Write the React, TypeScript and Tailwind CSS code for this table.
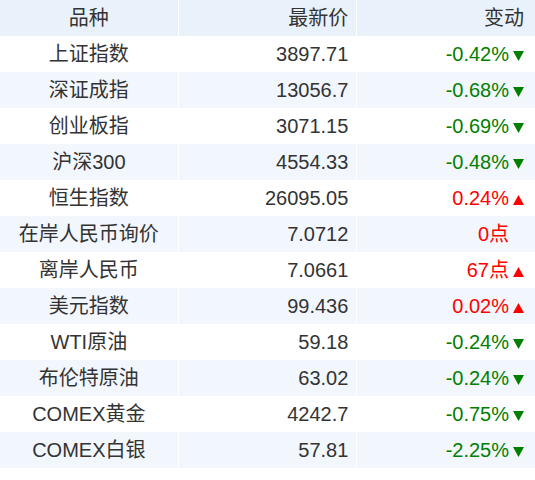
import React from "react";

type Row = { name: string; price: string; change: string; dir: "up" | "down" | "none"; color: "red" | "green" };

const rows: Row[] = [
  { name: "上证指数", price: "3897.71", change: "-0.42%", dir: "down", color: "green" },
  { name: "深证成指", price: "13056.7", change: "-0.68%", dir: "down", color: "green" },
  { name: "创业板指", price: "3071.15", change: "-0.69%", dir: "down", color: "green" },
  { name: "沪深300", price: "4554.33", change: "-0.48%", dir: "down", color: "green" },
  { name: "恒生指数", price: "26095.05", change: "0.24%", dir: "up", color: "red" },
  { name: "在岸人民币询价", price: "7.0712", change: "0点", dir: "none", color: "red" },
  { name: "离岸人民币", price: "7.0661", change: "67点", dir: "up", color: "red" },
  { name: "美元指数", price: "99.436", change: "0.02%", dir: "up", color: "red" },
  { name: "WTI原油", price: "59.18", change: "-0.24%", dir: "down", color: "green" },
  { name: "布伦特原油", price: "63.02", change: "-0.24%", dir: "down", color: "green" },
  { name: "COMEX黄金", price: "4242.7", change: "-0.75%", dir: "down", color: "green" },
  { name: "COMEX白银", price: "57.81", change: "-2.25%", dir: "down", color: "green" },
];

function Arrow({ dir }: { dir: Row["dir"] }) {
  if (dir === "none") return <span className="inline-block w-[11px]" />;
  if (dir === "up")
    return (
      <svg width="11" height="10" viewBox="0 0 11 10" className="inline-block">
        <polygon points="5.5,0 11,10 0,10" fill="#ff0000" />
      </svg>
    );
  return (
    <svg width="11" height="10" viewBox="0 0 11 10" className="inline-block">
      <polygon points="0,0 11,0 5.5,10" fill="#008000" />
    </svg>
  );
}

export default function App() {
  return (
    <div
      className="w-[535px] h-[480px] bg-white text-[#333] text-[20px]"
      style={{ fontFamily: '"Liberation Sans", Arial, "Noto Sans CJK SC", sans-serif' }}
    >
      <div className="grid grid-cols-3 gap-x-px bg-white">
        <div className="h-[36px] bg-[#e9f1fa] flex items-center justify-center">品种</div>
        <div className="h-[36px] bg-[#e9f1fa] flex items-center justify-end pr-[8px]">最新价</div>
        <div className="h-[36px] bg-[#e9f1fa] flex items-center justify-end pr-[11px]">变动</div>
        {rows.map((r, i) => {
          const bg = i % 2 === 0 ? "bg-white" : "bg-[#f2f6fd]";
          const col = r.color === "red" ? "text-[#ff0000]" : "text-[#008000]";
          return (
            <React.Fragment key={r.name}>
              <div className={`h-[36px] ${bg} flex items-center justify-center`}>{r.name}</div>
              <div className={`h-[36px] ${bg} flex items-center justify-end pr-[8px]`}>{r.price}</div>
              <div className={`h-[36px] ${bg} flex items-center justify-end pr-[11px] gap-[4px] ${col}`}>
                <span>{r.change}</span>
                <span className="flex items-center pt-[3px]">
                  <Arrow dir={r.dir} />
                </span>
              </div>
            </React.Fragment>
          );
        })}
      </div>
    </div>
  );
}
